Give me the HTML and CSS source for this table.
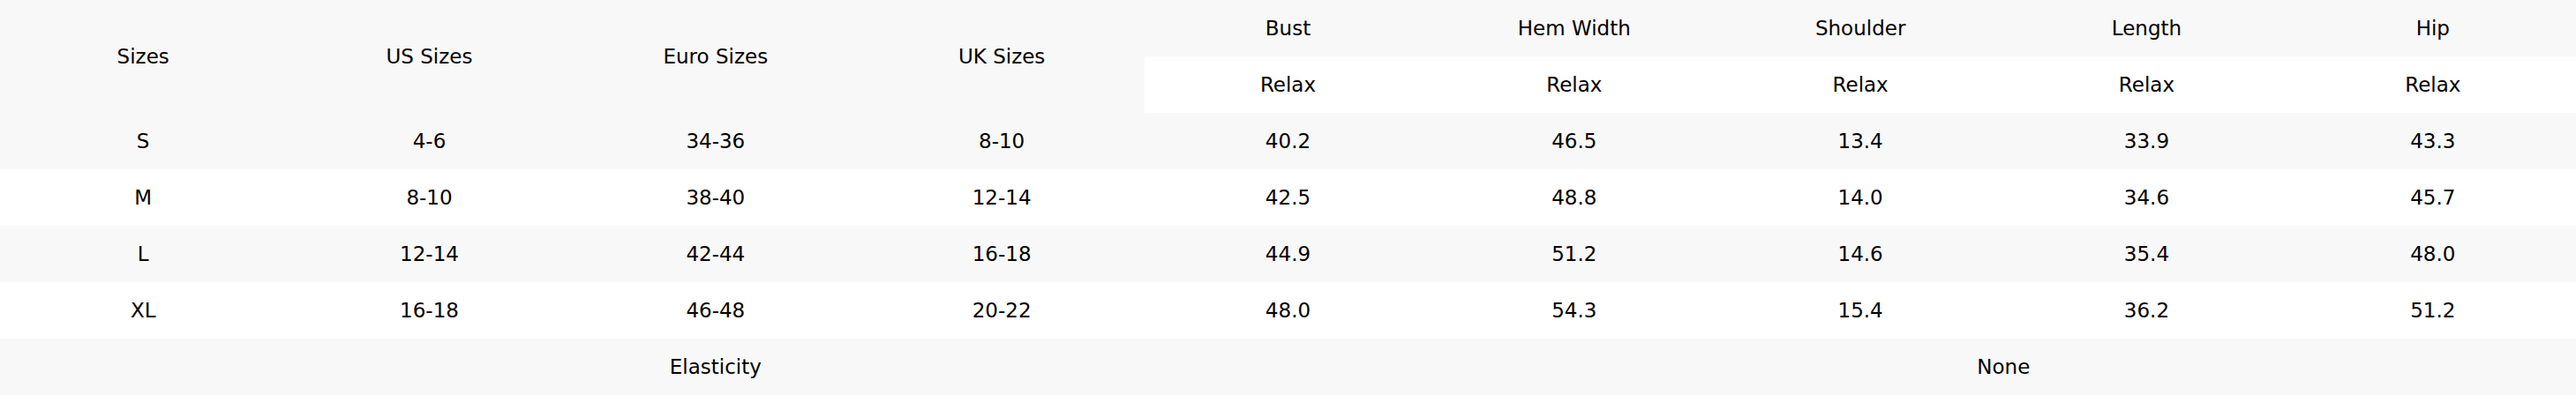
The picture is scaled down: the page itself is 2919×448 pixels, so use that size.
FILE: index.html
```html
<!DOCTYPE html>
<html lang="en">
<head>
<meta charset="utf-8">
<title>Size Chart</title>
<link rel="stylesheet" href="styles.css">
</head>
<body>
<table class="size-table">
  <colgroup>
    <col><col><col><col><col><col><col><col><col>
  </colgroup>
  <thead>
    <tr class="row-grey">
      <th rowspan="2">Sizes</th>
      <th rowspan="2">US Sizes</th>
      <th rowspan="2">Euro Sizes</th>
      <th rowspan="2">UK Sizes</th>
      <th>Bust</th>
      <th>Hem Width</th>
      <th>Shoulder</th>
      <th>Length</th>
      <th>Hip</th>
    </tr>
    <tr class="row-white">
      <th>Relax</th>
      <th>Relax</th>
      <th>Relax</th>
      <th>Relax</th>
      <th>Relax</th>
    </tr>
  </thead>
  <tbody>
    <tr class="row-grey">
      <td>S</td><td>4-6</td><td>34-36</td><td>8-10</td><td>40.2</td><td>46.5</td><td>13.4</td><td>33.9</td><td>43.3</td>
    </tr>
    <tr class="row-white">
      <td>M</td><td>8-10</td><td>38-40</td><td>12-14</td><td>42.5</td><td>48.8</td><td>14.0</td><td>34.6</td><td>45.7</td>
    </tr>
    <tr class="row-grey">
      <td>L</td><td>12-14</td><td>42-44</td><td>16-18</td><td>44.9</td><td>51.2</td><td>14.6</td><td>35.4</td><td>48.0</td>
    </tr>
    <tr class="row-white">
      <td>XL</td><td>16-18</td><td>46-48</td><td>20-22</td><td>48.0</td><td>54.3</td><td>15.4</td><td>36.2</td><td>51.2</td>
    </tr>
    <tr class="row-grey">
      <td colspan="5">Elasticity</td>
      <td colspan="4">None</td>
    </tr>
  </tbody>
</table>
</body>
</html>
```
FILE: styles.css
```css
html, body {
  margin: 0;
  padding: 0;
  background: #ffffff;
}

.size-table {
  width: 2919px;
  border-collapse: collapse;
  border-spacing: 0;
  table-layout: fixed;
  font-family: "DejaVu Sans", "Liberation Sans", sans-serif;
  font-size: 23px;
  color: #000000;
}

.size-table th,
.size-table td {
  height: 64px;
  padding: 0;
  text-align: center;
  vertical-align: middle;
  font-weight: normal;
}

.row-grey {
  background: #f8f8f8;
}

.row-white {
  background: #ffffff;
}
```
